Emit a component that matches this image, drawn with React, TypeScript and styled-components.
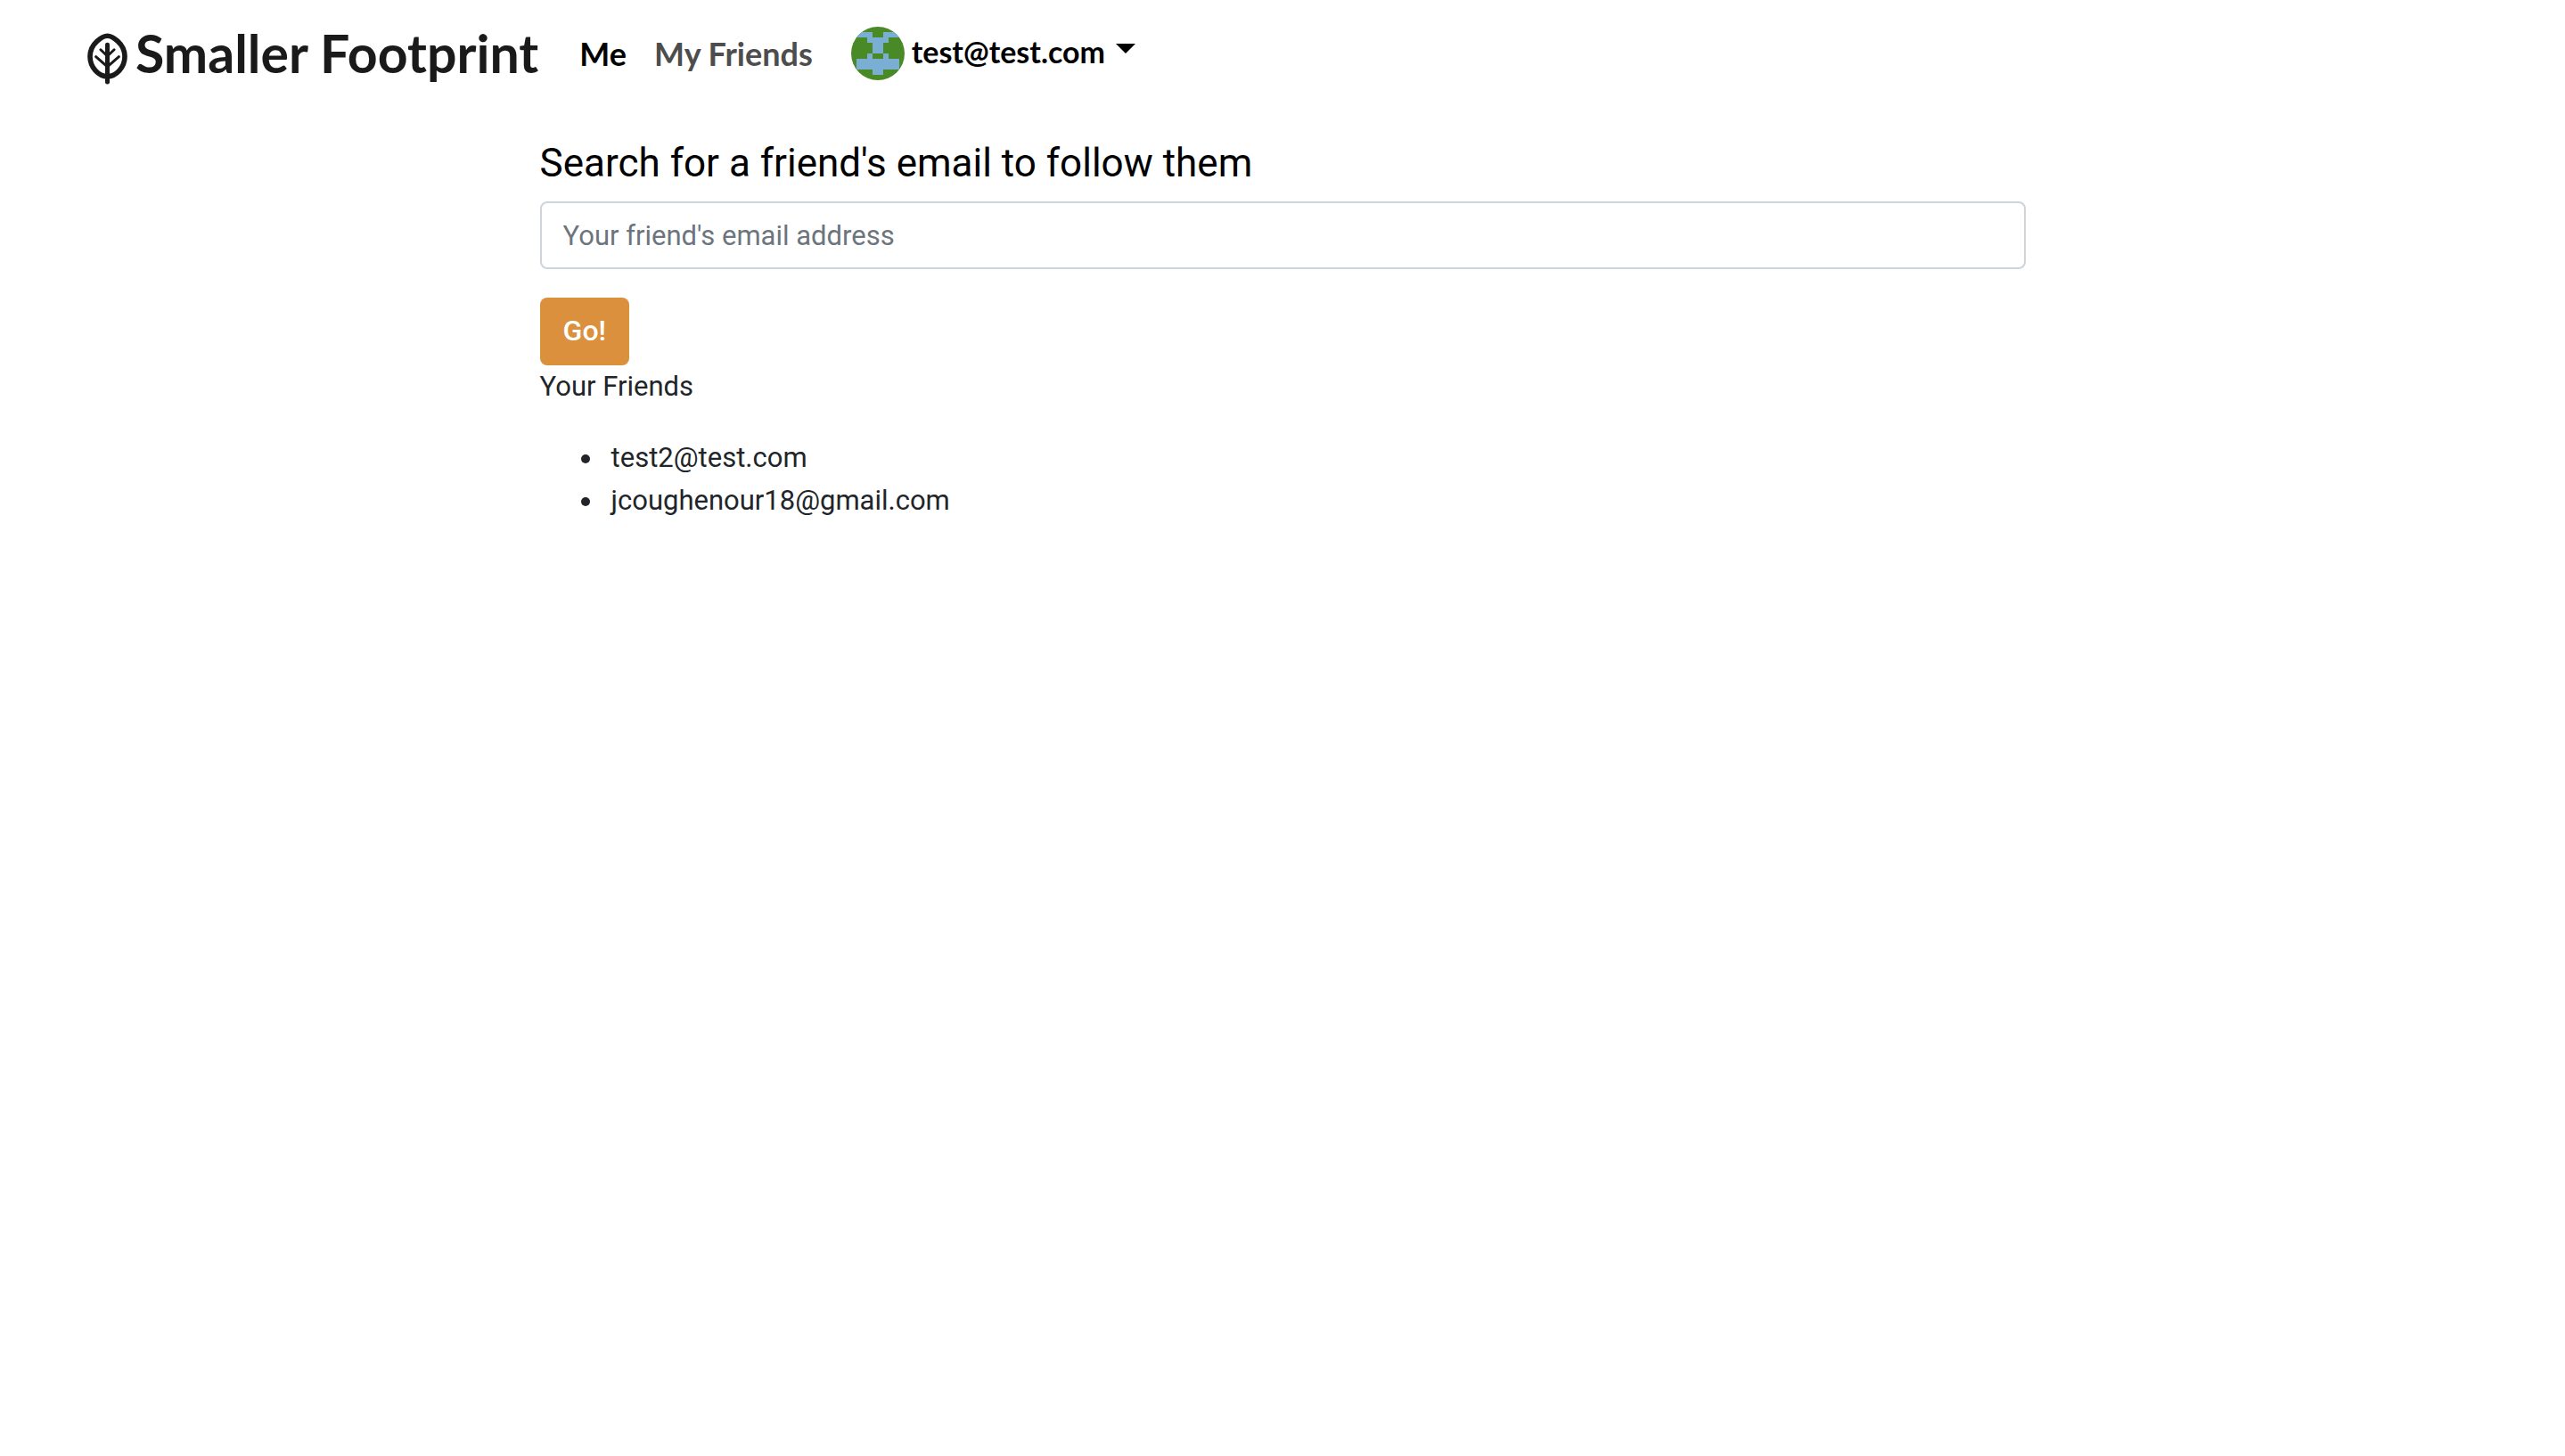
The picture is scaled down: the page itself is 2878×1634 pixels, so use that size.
import React from "react";
import styled, { createGlobalStyle } from "styled-components";

const GlobalStyle = createGlobalStyle`
  *, *::before, *::after { box-sizing: border-box; }
  body {
    margin: 0;
    background: #fff;
    color: #212529;
    font-family: Roboto, "Liberation Sans", sans-serif;
    font-size: 31px;
    line-height: 48px;
  }
`;

const navFont = `Lato, "Liberation Sans", sans-serif`;

const Navbar = styled.nav`
  display: flex;
  align-items: center;
  height: 120px;
  padding: 0 98px;
  font-family: ${navFont};
  font-weight: 700;
  white-space: nowrap;
`;

const Brand = styled.a`
  display: flex;
  align-items: center;
  gap: 9px;
  margin-right: 46px;
  color: #1a1a1a;
  font-size: 59px;
  line-height: 72px;
  text-decoration: none;
`;

const LeafIcon = styled.svg`
  width: 45px;
  height: 58px;
  margin-top: 12px;
  fill: none;
  stroke: currentColor;
  stroke-linecap: round;
  stroke-linejoin: round;
`;

const NavLink = styled.a<{ $active?: boolean }>`
  margin-right: 31px;
  color: ${(p) => (p.$active ? "#000" : "#4d4d4d")};
  font-size: 36px;
  line-height: 48px;
  text-decoration: none;
`;

const AccountButton = styled.button`
  display: flex;
  align-items: center;
  margin: 0 0 0 12px;
  padding: 0;
  border: 0;
  background: none;
  color: #000;
  font: 700 34px/48px ${navFont};
  cursor: pointer;
`;

const Avatar = styled.svg`
  width: 60px;
  height: 60px;
  border-radius: 50%;
`;

const AccountName = styled.span`
  padding: 0 12px 4px 8px;
`;

const Caret = styled.span`
  margin-bottom: 12px;
  border-top: 11px solid currentColor;
  border-left: 11px solid transparent;
  border-right: 11px solid transparent;
`;

const Main = styled.main`
  width: 60%;
  margin: 0 auto;
  padding: 36px 29px 0 30px;
`;

const SearchForm = styled.form`
  display: flex;
  flex-direction: column;
  align-items: flex-start;
`;

const SearchLabel = styled.label`
  margin-bottom: 16px;
  color: #000;
  font-size: 44px;
  line-height: 54px;
`;

const SearchInput = styled.input`
  width: 100%;
  height: 76px;
  margin: 0 0 32px;
  padding: 12px 24px;
  border: 2px solid #ced4da;
  border-radius: 8px;
  background: #fff;
  color: #495057;
  font: inherit;
  &::placeholder {
    color: #6c757d;
    opacity: 1;
  }
`;

const GoButton = styled.button`
  height: 76px;
  padding: 0 26px 2px;
  border: 0;
  border-radius: 8px;
  background: #da903d;
  color: #fff;
  font: inherit;
  font-size: 32px;
  font-weight: 500;
  cursor: pointer;
`;

const FriendList = styled.ul`
  margin: 32px 0;
  padding-left: 72px;
`;

const Friend = styled.li`
  padding-left: 8px;
`;

const friends = ["test2@test.com", "jcoughenour18@gmail.com"];

export default function App() {
  return (
    <>
      <GlobalStyle />
      <Navbar>
        <Brand href="#home">
          <LeafIcon viewBox="0 0 136 174" aria-hidden="true">
            <path
              strokeWidth="17"
              d="M68 9C54 9 9 33 9 79C9 116 38 147 68 147C98 147 127 116 127 79C127 33 82 9 68 9Z"
            />
            <path strokeWidth="15" d="M68 39V166" />
            <path strokeWidth="9" d="M45 56L68 78L91 56M29 80L68 114L107 80" />
          </LeafIcon>
          Smaller Footprint
        </Brand>
        <NavLink href="#me" $active>Me</NavLink>
        <NavLink href="#friends">My Friends</NavLink>
        <AccountButton type="button">
          <Avatar viewBox="0 0 10 10" shapeRendering="crispEdges" aria-hidden="true">
            <path fill="#498a27" d="M0 0H10V10H0Z" />
            <path
              fill="#7aafd3"
              d="M1 1H4V2H6V1H9V2H7V3H6V5H7V6H9V8H6V9H4V8H1V6H3V5H4V3H3V2H1Z"
            />
            <path fill="#498a27" d="M4 5H6V6H4Z" />
          </Avatar>
          <AccountName>test@test.com</AccountName>
          <Caret />
        </AccountButton>
      </Navbar>
      <Main>
        <SearchForm onSubmit={(e) => e.preventDefault()}>
          <SearchLabel htmlFor="friend-email">Search for a friend's email to follow them</SearchLabel>
          <SearchInput id="friend-email" type="email" placeholder="Your friend's email address" />
          <GoButton type="submit">Go!</GoButton>
        </SearchForm>
        <div>Your Friends</div>
        <FriendList>
          {friends.map((email) => (
            <Friend key={email}>{email}</Friend>
          ))}
        </FriendList>
      </Main>
    </>
  );
}
